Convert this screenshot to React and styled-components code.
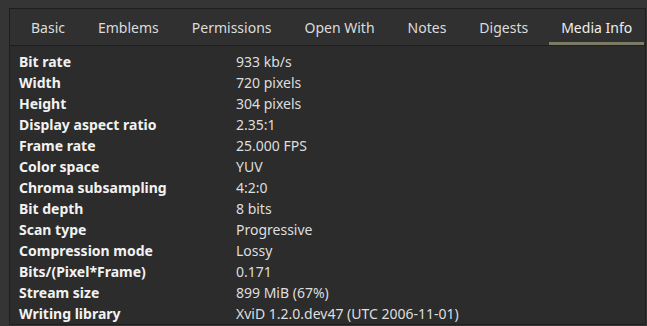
import React, { useState } from "react";
import styled, { createGlobalStyle } from "styled-components";

const GlobalStyle = createGlobalStyle`
  html, body {
    margin: 0;
    padding: 0;
    background: #353535;
  }
  body {
    font-family: "Noto Sans", "Open Sans", sans-serif;
    font-size: 14px;
  }
`;

const Page = styled.div`
  width: 647px;
  height: 326px;
  box-sizing: border-box;
  padding: 8px 1px 1px 9px;
  background: #353535;
`;

const Notebook = styled.div`
  height: 100%;
  display: flex;
  flex-direction: column;
  border: 1px solid #1f1f1f;
  background: #2c2c2c;
  box-sizing: border-box;
  overflow: hidden;
`;

const TabBar = styled.div`
  display: flex;
  gap: 9px;
  height: 36px;
  padding-left: 9px;
  background: #303030;
  border-bottom: 1px solid #1f1f1f;
  flex-shrink: 0;
`;

const Tab = styled.div`
  display: flex;
  align-items: center;
  padding: 0 12px;
  color: ${(p) => (p.active ? "#eeeeec" : "#dcdcdc")};
  white-space: nowrap;
  box-shadow: ${(p) => (p.active ? "inset 0 -3px 0 #7b7b68" : "none")};
  cursor: default;
`;

const Grid = styled.div`
  display: grid;
  grid-template-columns: 217px 1fr;
  grid-auto-rows: 21px;
  padding: 5px 0 0 9px;
  align-items: center;
`;

const Label = styled.div`
  font-weight: bold;
  color: #f2f2f2;
  white-space: nowrap;
`;

const Value = styled.div`
  color: #dedede;
  white-space: nowrap;
`;

const tabs = ["Basic", "Emblems", "Permissions", "Open With", "Notes", "Digests", "Media Info"];

const rows = [
  ["Bit rate", "933 kb/s"],
  ["Width", "720 pixels"],
  ["Height", "304 pixels"],
  ["Display aspect ratio", "2.35:1"],
  ["Frame rate", "25.000 FPS"],
  ["Color space", "YUV"],
  ["Chroma subsampling", "4:2:0"],
  ["Bit depth", "8 bits"],
  ["Scan type", "Progressive"],
  ["Compression mode", "Lossy"],
  ["Bits/(Pixel*Frame)", "0.171"],
  ["Stream size", "899 MiB (67%)"],
  ["Writing library", "XviD 1.2.0.dev47 (UTC 2006-11-01)"],
];

const App = () => {
  const [current, setCurrent] = useState("Media Info");

  return (
    <Page>
      <GlobalStyle />
      <Notebook>
        <TabBar>
          {tabs.map((t) => (
            <Tab key={t} active={t === current} onClick={() => setCurrent(t)}>
              {t}
            </Tab>
          ))}
        </TabBar>
        <Grid>
          {rows.map(([k, v]) => (
            <React.Fragment key={k}>
              <Label>{k}</Label>
              <Value>{v}</Value>
            </React.Fragment>
          ))}
        </Grid>
      </Notebook>
    </Page>
  );
};

export default App;
